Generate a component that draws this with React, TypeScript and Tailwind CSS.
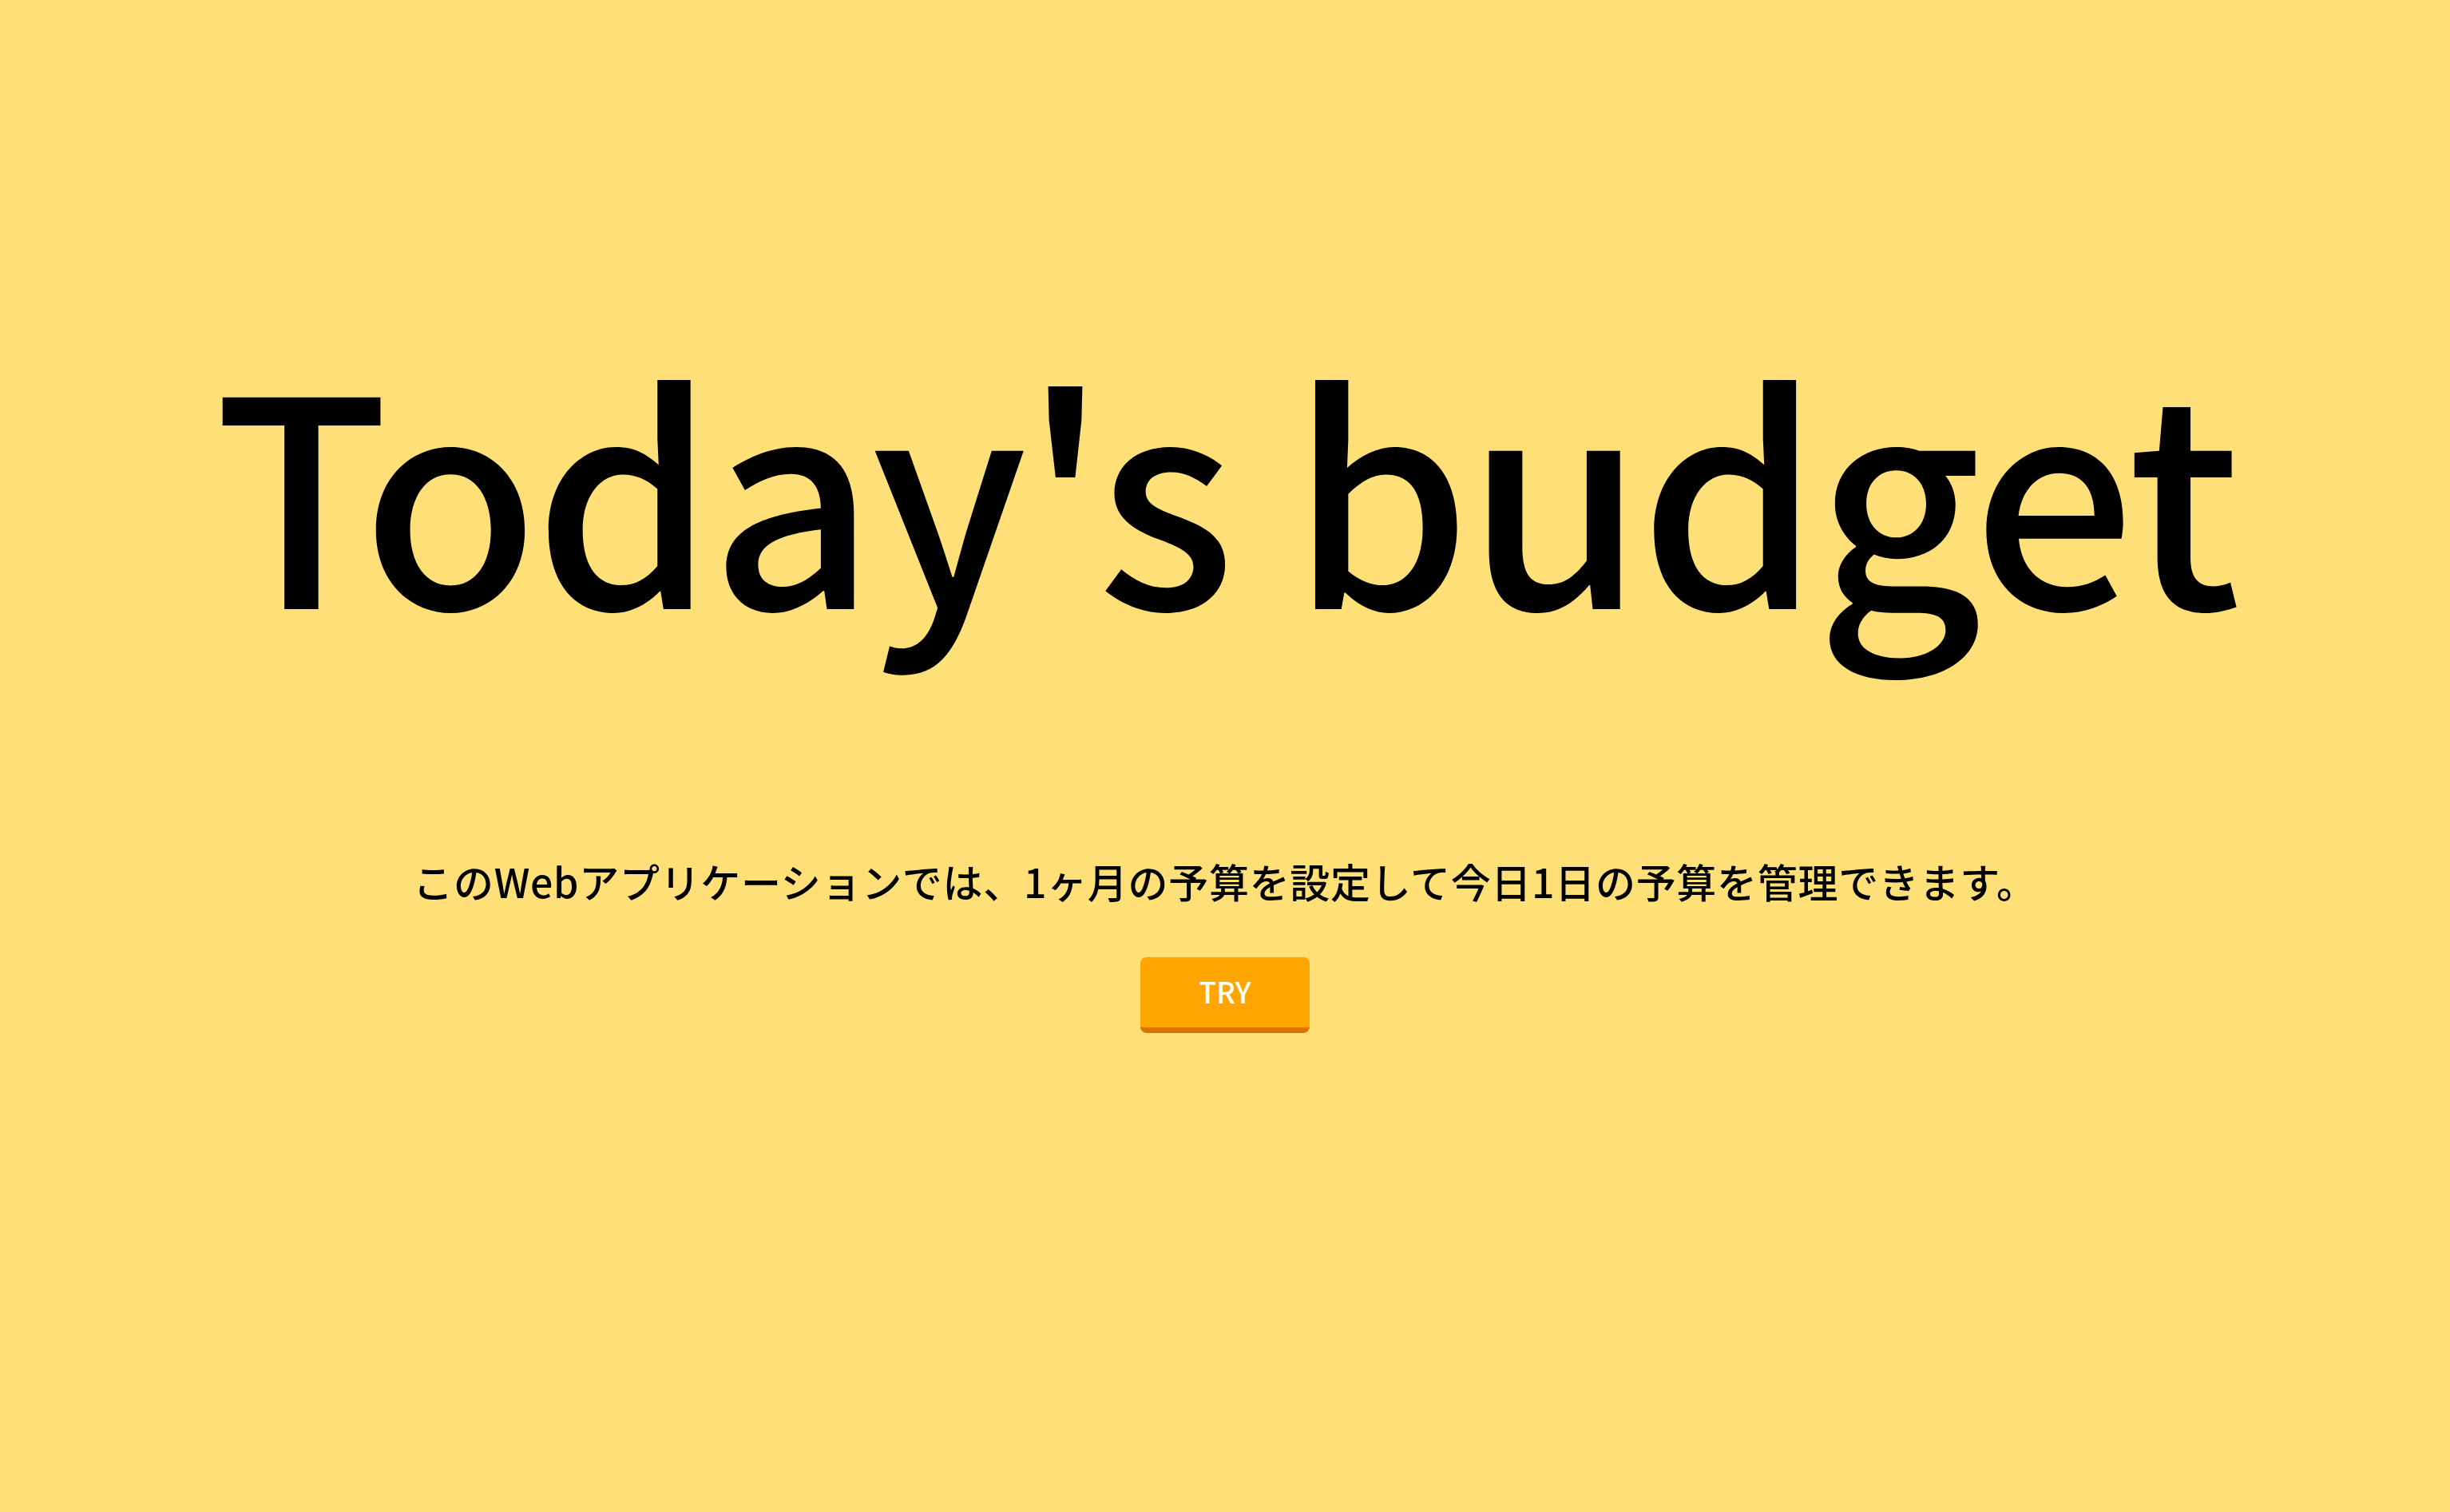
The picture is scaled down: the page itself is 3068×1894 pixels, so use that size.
export default function App() {
  return (
    <div className="min-h-screen w-full bg-[#ffdf77] flex flex-col items-center pt-[426px] font-['Noto_Sans_CJK_JP','Noto_Sans',sans-serif] text-black">
      <h1 className="text-[360px] leading-none font-medium whitespace-nowrap tracking-[-6px]">Today's budget</h1>
      <p className="mt-[292px] text-[50px] leading-none font-medium whitespace-nowrap tracking-[0.7px]">
        このWebアプリケーションでは、1ヶ月の予算を設定して今日1日の予算を管理できます。
      </p>
      <button className="mt-[71px] w-[212px] h-[95px] rounded-lg bg-[#ffa500] border-b-[7px] border-[#d67500] text-white text-[36px] font-medium leading-none pb-[4px]">
        TRY
      </button>
    </div>
  );
}
